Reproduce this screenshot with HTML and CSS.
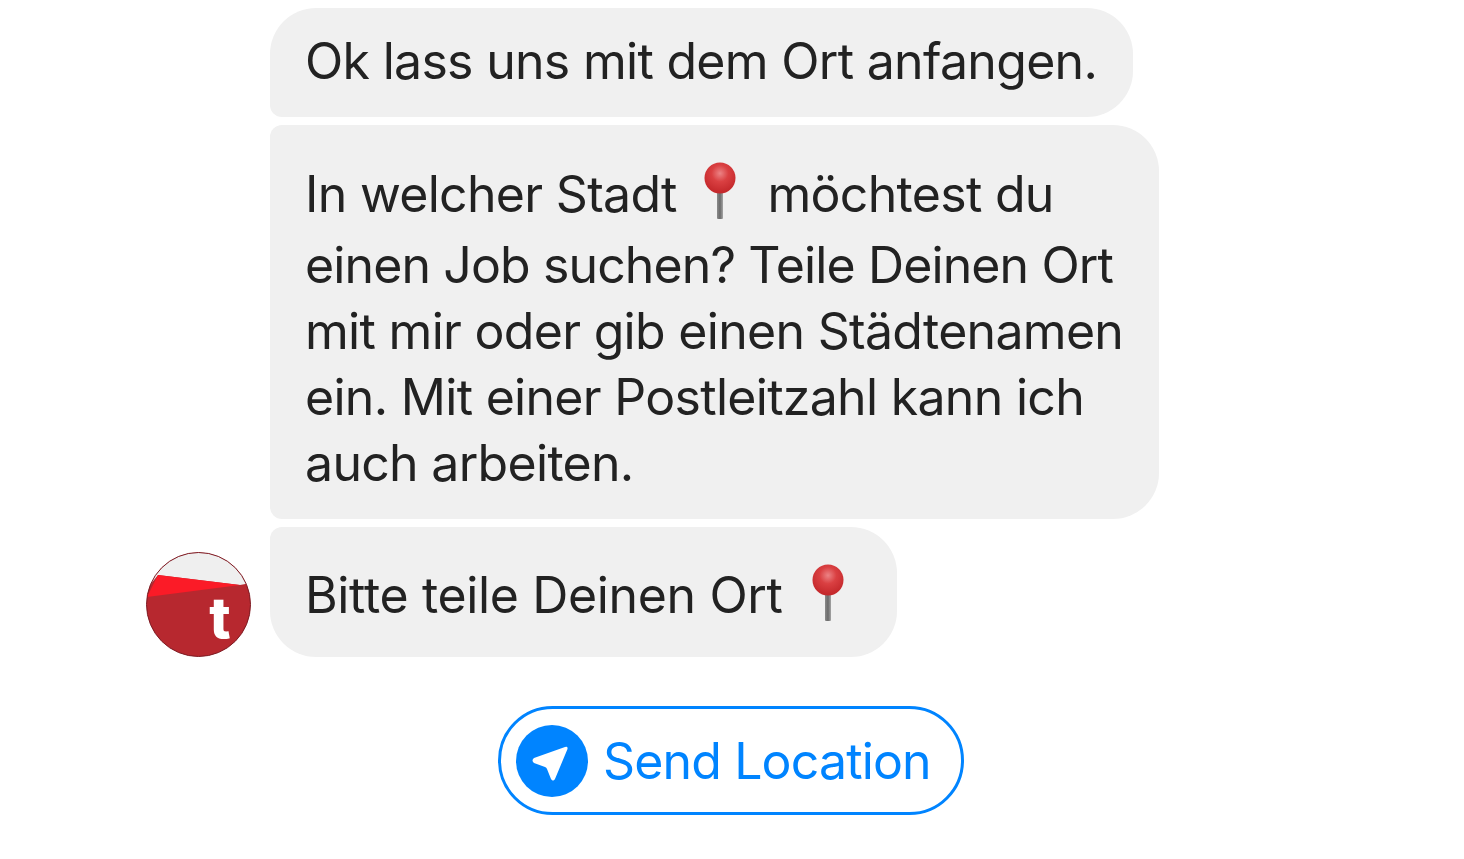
FILE: index.html
```html
<!DOCTYPE html>
<html lang="de">
<head>
<meta charset="utf-8">
<title>Chat</title>
<link rel="stylesheet" href="styles.css">
</head>
<body>
<svg class="defs" width="0" height="0" aria-hidden="true">
  <defs>
    <radialGradient id="ball" cx="0.5" cy="0.35" r="0.6">
      <stop offset="0" stop-color="#ec8385"/>
      <stop offset="0.45" stop-color="#da4042"/>
      <stop offset="1" stop-color="#c5292c"/>
    </radialGradient>
    <linearGradient id="needle" x1="0" x2="1" y1="0" y2="0">
      <stop offset="0" stop-color="#8b8b8b"/>
      <stop offset="0.5" stop-color="#6a6a6a"/>
      <stop offset="1" stop-color="#a5a5a5"/>
    </linearGradient>
    <symbol id="pin" viewBox="0 0 40 58">
      <rect x="17" y="26" width="6" height="31" rx="1" fill="url(#needle)"/>
      <circle cx="20" cy="16" r="15.5" fill="url(#ball)"/>
    </symbol>
  </defs>
</svg>
<main class="chat">
  <div class="thread">
    <div class="avatar-col">
      <svg class="avatar" viewBox="0 0 105 105" role="img" aria-label="t">
        <defs><clipPath id="disc"><circle cx="52.5" cy="52.5" r="52"/></clipPath></defs>
        <g clip-path="url(#disc)">
          <rect width="105" height="105" fill="#b7282f"/>
          <path d="M0 0H105V31L94 33L12 23L0 38Z" fill="#efefef"/>
          <path d="M12 23L94 33L1 45Z" fill="#fb1b27"/>
        </g>
        <circle cx="52.5" cy="52.5" r="52" fill="none" stroke="#7d1a22" stroke-width="1"/>
        <text class="avatar-t" x="74" y="86" text-anchor="middle">t</text>
      </svg>
    </div>
    <div class="bubbles">
      <div class="bubble first"><p>Ok lass uns mit dem Ort anfangen.</p></div>
      <div class="bubble middle">
        <p class="tall">In welcher Stadt <svg class="pin"><use href="#pin"/></svg> möchtest du</p>
        <p class="tight">einen Job suchen? Teile Deinen Ort</p>
        <p>mit mir oder gib einen Städtenamen</p>
        <p>ein. Mit einer Postleitzahl kann ich</p>
        <p>auch arbeiten.</p>
      </div>
      <div class="bubble last"><p class="tall">Bitte teile Deinen Ort <svg class="pin"><use href="#pin"/></svg></p></div>
    </div>
  </div>
  <div class="actions">
    <button class="location" type="button">
      <svg class="loc-icon" viewBox="0 0 72 72" aria-hidden="true">
        <circle cx="36" cy="36" r="36" fill="#0084ff"/>
        <path d="M18 33L49 22Q52 21 51.500 24L39 54Q37 57 35 54L31 44Q30.500 42.500 29 42L18 38Q15 35.500 18 33Z" fill="#fff"/>
      </svg>
      <span>Send Location</span>
    </button>
  </div>
</main>
</body>
</html>
```
FILE: styles.css
```css
* { box-sizing: border-box; }
html, body { margin: 0; height: 100%; background: #fff; overflow: hidden; }
body { font-family: "Inter", "Liberation Sans", sans-serif; }
.defs { display: block; height: 0; }
.chat { padding: 8px 0 0 146px; }
.thread { display: flex; align-items: flex-end; gap: 19px; }
.avatar-col { width: 105px; flex: none; }
.avatar { display: block; width: 105px; height: 105px; }
.avatar-t { font-family: "Inter", sans-serif; font-weight: 800; font-size: 56px; fill: #fff; }
.bubbles { display: flex; flex-direction: column; align-items: flex-start; gap: 8px; }
.bubble { background: #f0f0f0; color: #222; padding: 20px 36px 23px 35px; font-size: 50px; line-height: 66px; letter-spacing: -0.7px; white-space: nowrap; }
.bubble p { margin: 0; }
.bubble p.tall { line-height: 76px; }
.bubble p.tight { letter-spacing: -0.88px; }
.first { border-radius: 46px 46px 46px 12px; }
.middle { border-radius: 12px 46px 46px 12px; padding: 31px 36px 23px 35px; }
.last { border-radius: 12px 46px 46px 46px; padding: 30px 37px 24px 35px; letter-spacing: -0.35px; }
.pin { display: inline-block; width: 40px; height: 58px; margin: 0 14px 0 10px; vertical-align: -8px; }
.last .pin { margin: 0 12px; vertical-align: -9px; }
.actions { padding: 49px 0 0 352px; }
.location { display: inline-flex; align-items: center; gap: 15px; width: 466px; height: 109px; padding: 0 15px; background: #fff; border: 3px solid #0084ff; border-radius: 55px; color: #0084ff; font-family: inherit; font-size: 50px; letter-spacing: -0.85px; }
.loc-icon { width: 72px; height: 72px; flex: none; }
```
